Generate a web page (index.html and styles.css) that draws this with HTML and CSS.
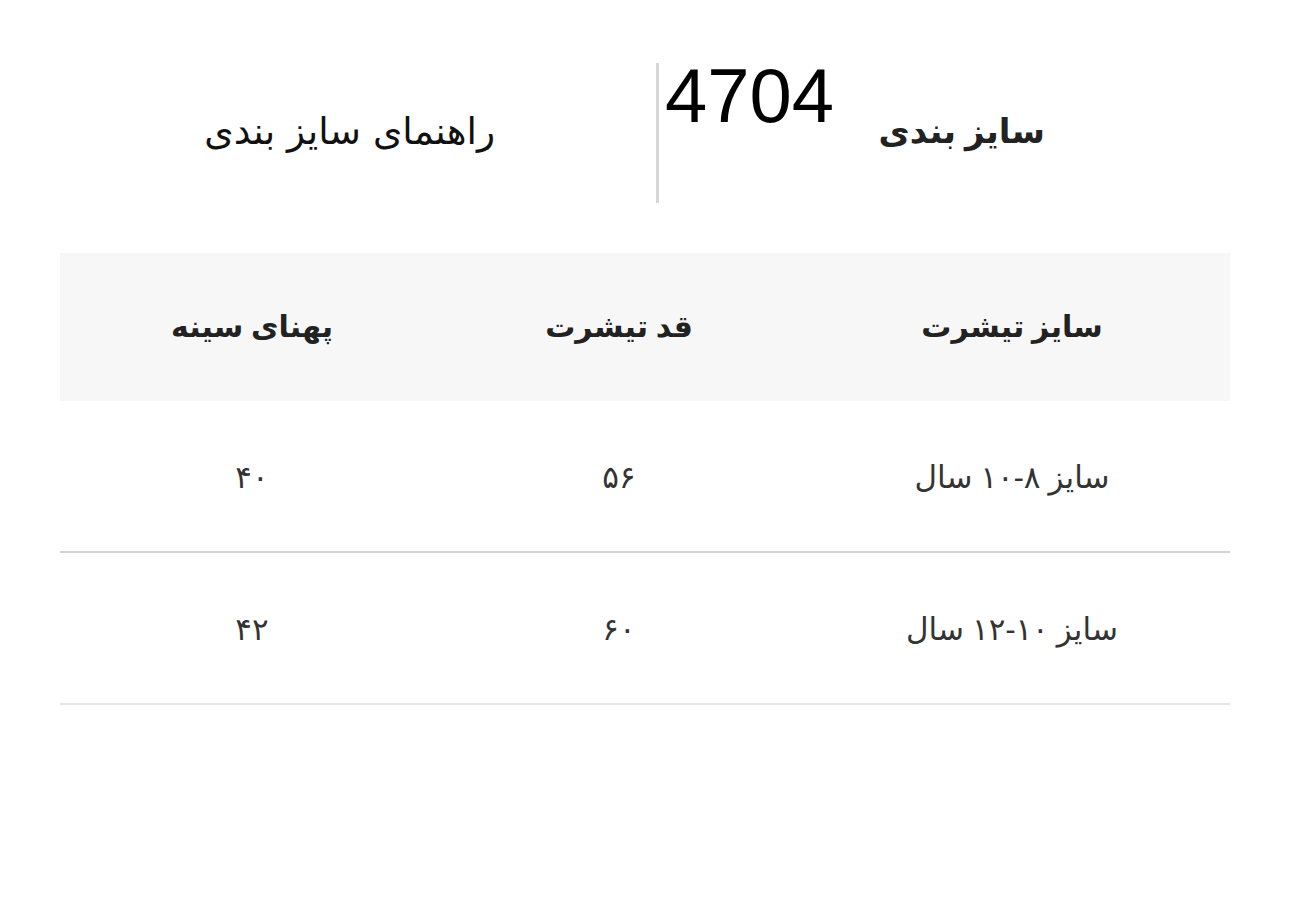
FILE: index.html
```html
<!DOCTYPE html>
<html lang="fa" dir="rtl">
<head>
<meta charset="utf-8">
<title>سایز بندی</title>
<link rel="stylesheet" href="styles.css">
</head>
<body>
<div class="page">
  <div class="head">
    <div class="head-main">
      <h2 class="title">سایز بندی</h2>
      <span class="code">4704</span>
    </div>
    <div class="head-side">
      <span class="guide">راهنمای سایز بندی</span>
    </div>
  </div>
  <div class="table">
    <div class="row row-head">
      <div class="cell c1">سایز تیشرت</div>
      <div class="cell c2">قد تیشرت</div>
      <div class="cell c3">پهنای سینه</div>
    </div>
    <div class="row row-a">
      <div class="cell c1">سایز ۸-۱۰ سال</div>
      <div class="cell c2">۵۶</div>
      <div class="cell c3">۴۰</div>
    </div>
    <div class="row row-b">
      <div class="cell c1">سایز ۱۰-۱۲ سال</div>
      <div class="cell c2">۶۰</div>
      <div class="cell c3">۴۲</div>
    </div>
  </div>
</div>
</body>
</html>
```

FILE: styles.css
```css
html, body {
  margin: 0;
  padding: 0;
  background: #ffffff;
}
body {
  font-family: "Noto Sans", "DejaVu Sans", sans-serif;
  color: #222222;
}
.page {
  padding: 0 60px;
}
.head {
  display: flex;
  margin-top: 63px;
  height: 140px;
}
.head-main {
  width: 574px;
  display: flex;
  align-items: center;
  border-left: 3px solid #d6d6d6;
  padding-right: 185px;
  box-sizing: border-box;
}
.title {
  margin: 0 0 6px 0;
  font-size: 34px;
  font-weight: 700;
  color: #222;
  line-height: 1;
}
.code {
  align-self: flex-start;
  margin-right: auto;
  margin-left: 6px;
  margin-top: -5px;
  font-family: "Liberation Sans", Arial, sans-serif;
  font-size: 76px;
  line-height: 76px;
  color: #000;
  direction: ltr;
}
.head-side {
  flex: 1;
  display: flex;
  align-items: center;
  justify-content: flex-start;
  padding-right: 161px;
}
.guide {
  font-family: "DejaVu Sans", sans-serif;
  font-size: 37.5px;
  color: #111;
  margin-bottom: 4px;
}
.table {
  margin-top: 50px;
}
.row {
  display: grid;
  grid-template-columns: 436px 350px 384px;
  align-items: center;
}
.row-head {
  background: #f7f7f7;
  height: 148px;
}
.row-head .cell {
  font-weight: 700;
  font-size: 30px;
  color: #222;
  margin-bottom: 4px;
}
.row-a, .row-b {
  height: 150px;
  font-size: 31px;
  color: #333;
}
.row-a {
  border-bottom: 2px solid #d3d3d3;
}
.row-b {
  border-bottom: 2px solid #e6e6e6;
}
.cell {
  text-align: center;
}
```
